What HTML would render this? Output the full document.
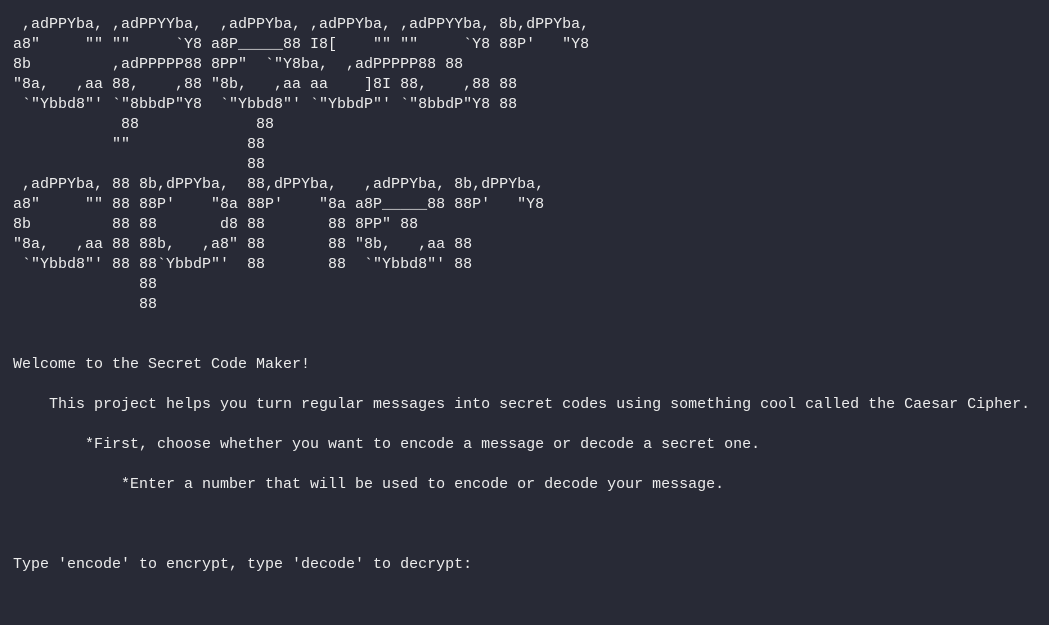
<!DOCTYPE html>
<html><head><meta charset="utf-8"><style>
html,body{margin:0;padding:0;background:#282a36;width:1049px;height:625px;overflow:hidden}
pre{margin:0;padding:15px 0 0 13px;font-family:"Liberation Mono",monospace;font-size:15px;line-height:20px;color:#ececec;white-space:pre}
</style></head><body><pre> ,adPPYba, ,adPPYYba,  ,adPPYba, ,adPPYba, ,adPPYYba, 8b,dPPYba,
a8"     "" ""     `Y8 a8P_____88 I8[    "" ""     `Y8 88P'   "Y8
8b         ,adPPPPP88 8PP"  `"Y8ba,  ,adPPPPP88 88
"8a,   ,aa 88,    ,88 "8b,   ,aa aa    ]8I 88,    ,88 88
 `"Ybbd8"' `"8bbdP"Y8  `"Ybbd8"' `"YbbdP"' `"8bbdP"Y8 88
            88             88
           ""             88
                          88
 ,adPPYba, 88 8b,dPPYba,  88,dPPYba,   ,adPPYba, 8b,dPPYba,
a8"     "" 88 88P'    "8a 88P'    "8a a8P_____88 88P'   "Y8
8b         88 88       d8 88       88 8PP" 88
"8a,   ,aa 88 88b,   ,a8" 88       88 "8b,   ,aa 88
 `"Ybbd8"' 88 88`YbbdP"'  88       88  `"Ybbd8"' 88
              88
              88


Welcome to the Secret Code Maker!

    This project helps you turn regular messages into secret codes using something cool called the Caesar Cipher.

        *First, choose whether you want to encode a message or decode a secret one.

            *Enter a number that will be used to encode or decode your message.



Type 'encode' to encrypt, type 'decode' to decrypt:
</pre></body></html>
